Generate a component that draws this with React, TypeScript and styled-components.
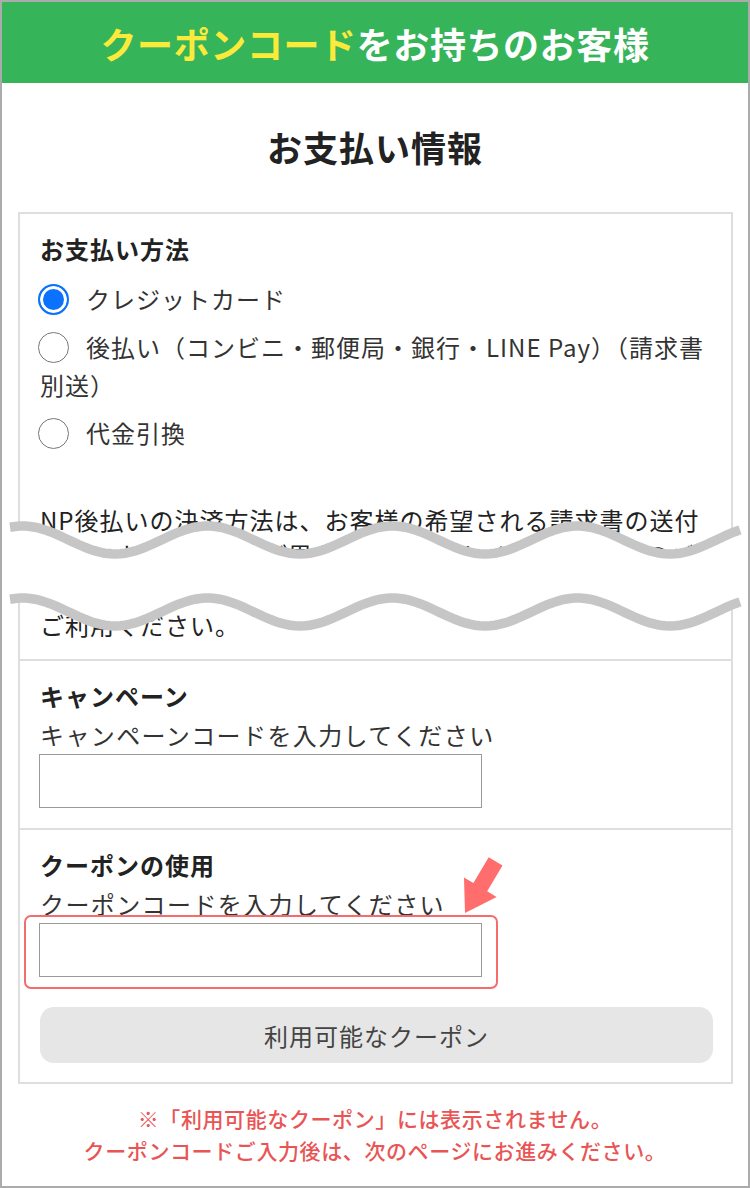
import React from 'react';
import styled, { createGlobalStyle } from 'styled-components';

const GlobalStyle = createGlobalStyle`
  html, body {
    margin: 0;
    padding: 0;
    background: #fff;
  }
  body {
    font-family: "Noto Sans CJK JP", "Noto Sans", sans-serif;
    color: #333;
  }
  * {
    box-sizing: border-box;
  }
`;

const Frame = styled.div`
  width: 750px;
  height: 1188px;
  border: 2px solid #ababab;
  overflow: hidden;
  background: #fff;
`;

const Banner = styled.div`
  height: 81px;
  background: #35b45a;
  display: flex;
  align-items: center;
  justify-content: center;
  color: #fff;
  font-size: 36px;
  font-weight: 700;
  letter-spacing: 0.6px;
`;

const Accent = styled.span`
  color: #fcea3a;
`;

const PageTitle = styled.h1`
  margin: 39px 0 40px;
  font-size: 35px;
  line-height: 50px;
  font-weight: 700;
  letter-spacing: 1px;
  text-align: center;
  color: #222;
`;

const Card = styled.div`
  margin: 0 15px 0 16px;
  border: 2px solid #dedede;
`;

const Section = styled.section`
  position: relative;
  padding: 17px 18px 17px 20px;

  & + & {
    border-top: 2px solid #dedede;
  }
`;

const Heading = styled.h2`
  margin: 0;
  font-size: 24px;
  line-height: 36px;
  font-weight: 700;
  letter-spacing: 1px;
  color: #222;
`;

const RadioList = styled.div`
  margin-top: 13px;
  display: flex;
  flex-direction: column;
  gap: 10px;
`;

const RadioItem = styled.label`
  display: block;
  font-size: 24px;
  line-height: 38px;
  letter-spacing: 1px;
  color: #333;
`;

const RadioMark = styled.span<{ $checked?: boolean }>`
  display: inline-block;
  width: 31px;
  height: 31px;
  margin: 0 17px 0 -2px;
  border-radius: 50%;
  vertical-align: middle;
  position: relative;
  top: -3px;
  border: ${(p) => (p.$checked ? '2.5px solid #0a72ff' : '1.5px solid #777')};
  background: ${(p) => (p.$checked ? '#0a72ff' : '#fff')};
  box-shadow: ${(p) => (p.$checked ? 'inset 0 0 0 3px #fff' : 'none')};
`;

const Notice = styled.p`
  position: relative;
  margin: 50px 0 0;
  font-size: 24px;
  line-height: 35px;
  letter-spacing: 1px;
  color: #222;
`;

const CutMark = styled.svg`
  position: absolute;
  left: -30px;
  top: 14px;
  width: 730px;
  height: 130px;
  overflow: visible;
`;

const FieldLabel = styled.div`
  margin-top: 4px;
  font-size: 24px;
  line-height: 34px;
  letter-spacing: 1.4px;
  color: #333;
`;

const InputWrap = styled.div<{ $highlight?: boolean }>`
  position: relative;
  width: 443px;
  margin: 2px 0 3px -1px;

  &::before {
    content: '';
    display: ${(p) => (p.$highlight ? 'block' : 'none')};
    position: absolute;
    top: -8px;
    left: -15px;
    right: -16px;
    bottom: -12px;
    border: 2.5px solid #f56c6c;
    border-radius: 7px;
    pointer-events: none;
  }
`;

const CodeInput = styled.input`
  display: block;
  width: 100%;
  height: 54px;
  margin: 0;
  border: 1.5px solid #9a9a9a;
  border-radius: 0;
  background: #fff;
  outline: none;
`;

const CouponButton = styled.button`
  display: block;
  width: 100%;
  height: 56px;
  margin: 30px 0 2px;
  border: none;
  border-radius: 14px;
  background: #e6e6e6;
  font-family: inherit;
  font-size: 24px;
  letter-spacing: 1px;
  color: #444;
`;

const Pointer = styled.svg`
  position: absolute;
  left: 438px;
  top: 24px;
  width: 50px;
  height: 64px;
`;

const Caution = styled.p`
  margin: 18px 0 0;
  text-align: center;
  font-size: 21px;
  line-height: 32px;
  font-weight: 500;
  letter-spacing: 0.6px;
  color: #e95555;
`;

const WAVE_W = 730;

const wave = (mean: number) => {
  const pts: [number, number][] = [];
  for (let x = 0; x <= WAVE_W; x += 5) {
    pts.push([x, mean + 14 * Math.cos((2 * Math.PI * (x - 105)) / 185)]);
  }
  return pts;
};

const toPath = (pts: [number, number][]) =>
  pts.map(([x, y], i) => `${i ? 'L' : 'M'}${x} ${y.toFixed(1)}`).join(' ');

const Cut = () => {
  const top = wave(24);
  const bottom = wave(96);
  const fill = toPath(top) + ' ' + toPath([...bottom].reverse()).replace('M', 'L') + ' Z';
  return (
    <CutMark viewBox={`0 0 ${WAVE_W} 130`}>
      <path d={fill} fill="#fff" />
      <path d={toPath(top)} fill="none" stroke="#c6c6c6" strokeWidth="9.5" />
      <path d={toPath(bottom)} fill="none" stroke="#c6c6c6" strokeWidth="9.5" />
    </CutMark>
  );
};

const methods = [
  { label: 'クレジットカード', checked: true },
  { label: '後払い（コンビニ・郵便局・銀行・LINE Pay）（請求書別送）', checked: false },
  { label: '代金引換', checked: false },
];

const App = () => {
  return (
    <>
      <GlobalStyle />
      <Frame>
        <Banner>
          <Accent>クーポンコード</Accent>をお持ちのお客様
        </Banner>
        <PageTitle>お支払い情報</PageTitle>
        <Card>
          <Section>
            <Heading>お支払い方法</Heading>
            <RadioList>
              {methods.map((m) => (
                <RadioItem key={m.label}>
                  <RadioMark $checked={m.checked} />
                  {m.label}
                </RadioItem>
              ))}
            </RadioList>
            <Notice>
              NP後払いの決済方法は、お客様の希望される請求書の送付方法によって手数料が異なります。詳しくはNP後払いのご案内をご確認のうえ、
              <br />
              ご利用ください。
              <Cut />
            </Notice>
          </Section>
          <Section>
            <Heading>キャンペーン</Heading>
            <FieldLabel>キャンペーンコードを入力してください</FieldLabel>
            <InputWrap>
              <CodeInput type="text" />
            </InputWrap>
          </Section>
          <Section>
            <Heading>クーポンの使用</Heading>
            <FieldLabel>クーポンコードを入力してください</FieldLabel>
            <InputWrap $highlight>
              <CodeInput type="text" />
            </InputWrap>
            <CouponButton type="button">利用可能なクーポン</CouponButton>
            <Pointer viewBox="0 0 50 64">
              <polygon
                points="7,59 6,23.5 15.4,29.1 30.7,3.3 44.5,11.5 29.2,37.3 38.6,42.9"
                fill="#ff6d6d"
              />
            </Pointer>
          </Section>
        </Card>
        <Caution>
          ※「利用可能なクーポン」には表示されません。
          <br />
          クーポンコードご入力後は、次のページにお進みください。
        </Caution>
      </Frame>
    </>
  );
};

export default App;
